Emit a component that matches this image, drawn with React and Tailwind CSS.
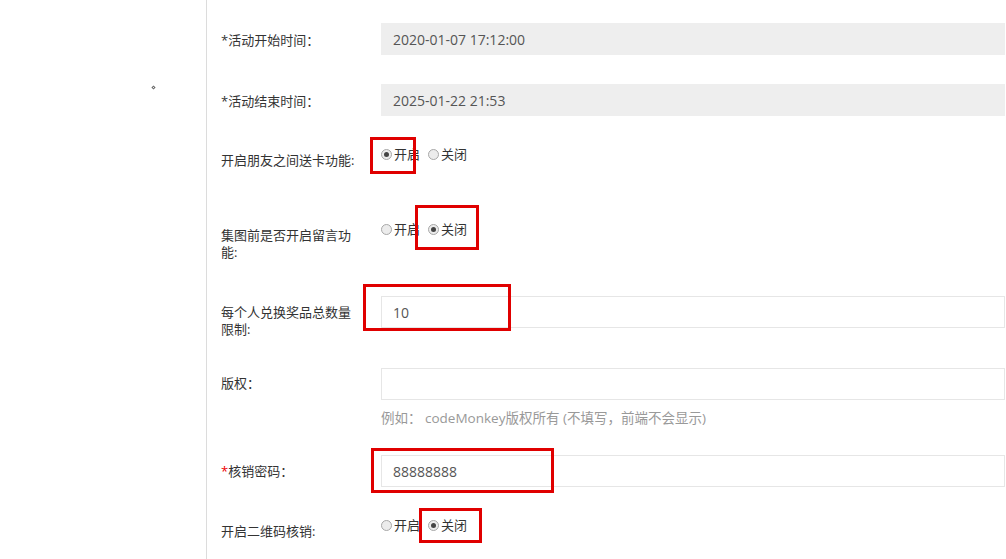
import React from 'react';

const font = { fontFamily: '"Open Sans", "Noto Sans CJK SC", sans-serif' };

function Radio({ label, checked }) {
  return (
    <span className="inline-flex items-center h-[17px] mr-[8px]">
      <span className="w-[11px] h-[11px] rounded-full border border-[#a8a8a8] bg-[#ececec] flex items-center justify-center mr-[2px]">
        {checked && <span className="w-[5px] h-[5px] rounded-full bg-[#444]" />}
      </span>
      <span>{label}</span>
    </span>
  );
}

function Label({ children, pt = 'pt-[9px]' }) {
  return (
    <div className={`w-[140px] shrink-0 mr-[20px] text-[13px] leading-[17px] text-[#333] ${pt}`}>
      {children}
    </div>
  );
}

function Field({ value, disabled }) {
  return (
    <div
      className={`flex-1 h-[32px] flex items-center px-[11px] text-[14px] text-[#555] border ${
        disabled ? 'bg-[#eeeeee] border-[#eeeeee]' : 'bg-white border-[#e6e6e6]'
      }`}
    >
      {value}
    </div>
  );
}

function Radios({ on }) {
  return (
    <div className="flex items-start text-[13px] leading-[17px] text-[#333]">
      <Radio label="开启" checked={on} />
      <Radio label="关闭" checked={!on} />
    </div>
  );
}

// red annotation boxes laid over the form
const marks = [
  { left: 370, top: 137, width: 46, height: 37 },
  { left: 415, top: 205, width: 64, height: 45 },
  { left: 363, top: 284, width: 148, height: 47 },
  { left: 371, top: 448, width: 183, height: 45 },
  { left: 419, top: 508, width: 63, height: 35 },
];

export default function App() {
  return (
    <div className="relative w-[1006px] h-[559px] bg-white overflow-hidden" style={font}>
      <div className="flex h-full">
        {/* sidebar */}
        <div className="w-[207px] shrink-0 h-full border-r border-[#dcdcdc] pl-[152px] pt-[86px]">
          <div className="w-[3px] h-[3px] rotate-45 border border-[#666]" />
        </div>

        {/* form */}
        <div className="flex-1 pl-[14px] pr-[1px]">
          <div className="flex items-start h-[32px] mt-[23px]">
            <Label>*活动开始时间：</Label>
            <Field value="2020-01-07 17:12:00" disabled />
          </div>

          <div className="flex items-start h-[32px] mt-[29px]">
            <Label>*活动结束时间：</Label>
            <Field value="2025-01-22 21:53" disabled />
          </div>

          <div className="flex items-start h-[23px] mt-[30px]">
            <Label pt="pt-[6px]">开启朋友之间送卡功能:</Label>
            <Radios on />
          </div>

          <div className="flex items-start h-[40px] mt-[52px]">
            <Label pt="pt-[6px]">集图前是否开启留言功能:</Label>
            <Radios on={false} />
          </div>

          <div className="flex items-start h-[32px] mt-[35px]">
            <Label pt="pt-[8px]">每个人兑换奖品总数量限制:</Label>
            <Field value="10" />
          </div>

          <div className="flex items-start mt-[40px]">
            <Label pt="pt-[7px]">版权：</Label>
            <div className="flex-1">
              <Field value="" />
              <div className="mt-[9px] text-[13.5px] leading-[18px] text-[#999]">
                例如： codeMonkey版权所有 (不填写，前端不会显示)
              </div>
            </div>
          </div>

          <div className="flex items-start h-[32px] mt-[28px]">
            <Label pt="pt-[8px]">
              <span className="text-[#e00]">*</span>核销密码：
            </Label>
            <Field value="88888888" />
          </div>

          <div className="flex items-start mt-[30px]">
            <Label pt="pt-[6px]">开启二维码核销:</Label>
            <Radios on={false} />
          </div>
        </div>
      </div>

      {marks.map((m, i) => (
        <div
          key={i}
          className="absolute border-[3px] border-[#e00000]"
          style={{ left: m.left, top: m.top, width: m.width, height: m.height }}
        />
      ))}
    </div>
  );
}
